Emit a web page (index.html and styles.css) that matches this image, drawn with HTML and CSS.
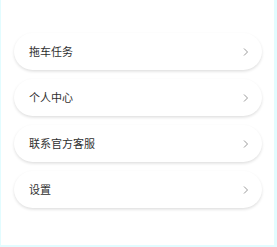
FILE: index.html
```html
<!DOCTYPE html>
<html lang="zh-CN">
<head>
    <meta charset="UTF-8">
    <meta name="viewport" content="width=device-width, initial-scale=1.0">
    <title>我的</title>
    <link rel="stylesheet" href="styles.css">
</head>
<body>
    <div class="page">
        <div class="menu">
            <div class="menu-item">
                <span class="label">拖车任务</span>
                <svg class="arrow" viewBox="0 0 6 10" width="6" height="10"><path d="M1 1.5 L4.5 5 L1 8.5" /></svg>
            </div>
            <div class="menu-item">
                <span class="label">个人中心</span>
                <svg class="arrow" viewBox="0 0 6 10" width="6" height="10"><path d="M1 1.5 L4.5 5 L1 8.5" /></svg>
            </div>
            <div class="menu-item">
                <span class="label">联系官方客服</span>
                <svg class="arrow" viewBox="0 0 6 10" width="6" height="10"><path d="M1 1.5 L4.5 5 L1 8.5" /></svg>
            </div>
            <div class="menu-item">
                <span class="label">设置</span>
                <svg class="arrow" viewBox="0 0 6 10" width="6" height="10"><path d="M1 1.5 L4.5 5 L1 8.5" /></svg>
            </div>
        </div>
    </div>
</body>
</html>
```

FILE: styles.css
```css
html, body {
    margin: 0;
    padding: 0;
}

body {
    background: #e2fcff;
    font-family: "Noto Sans CJK SC", "Noto Sans", sans-serif;
    height: 247px;
    overflow: hidden;
}

.page {
    background: #ffffff;
    margin: 0 3px 0 1px;
    height: 245px;
    box-sizing: border-box;
    padding: 33px 12px 0 13px;
}

.menu {
    display: flex;
    flex-direction: column;
    gap: 9px;
}

.menu-item {
    height: 37px;
    display: flex;
    align-items: center;
    justify-content: space-between;
    padding: 0 13px 0 15px;
    background: #ffffff;
    border-radius: 19px;
    box-shadow: 0 1.5px 3px rgba(0, 0, 0, 0.13);
}

.label {
    font-size: 11px;
    color: #2f2f2f;
    line-height: 1;
}

.arrow {
    fill: none;
    stroke: #9a9a9a;
    stroke-width: 1;
}
```
